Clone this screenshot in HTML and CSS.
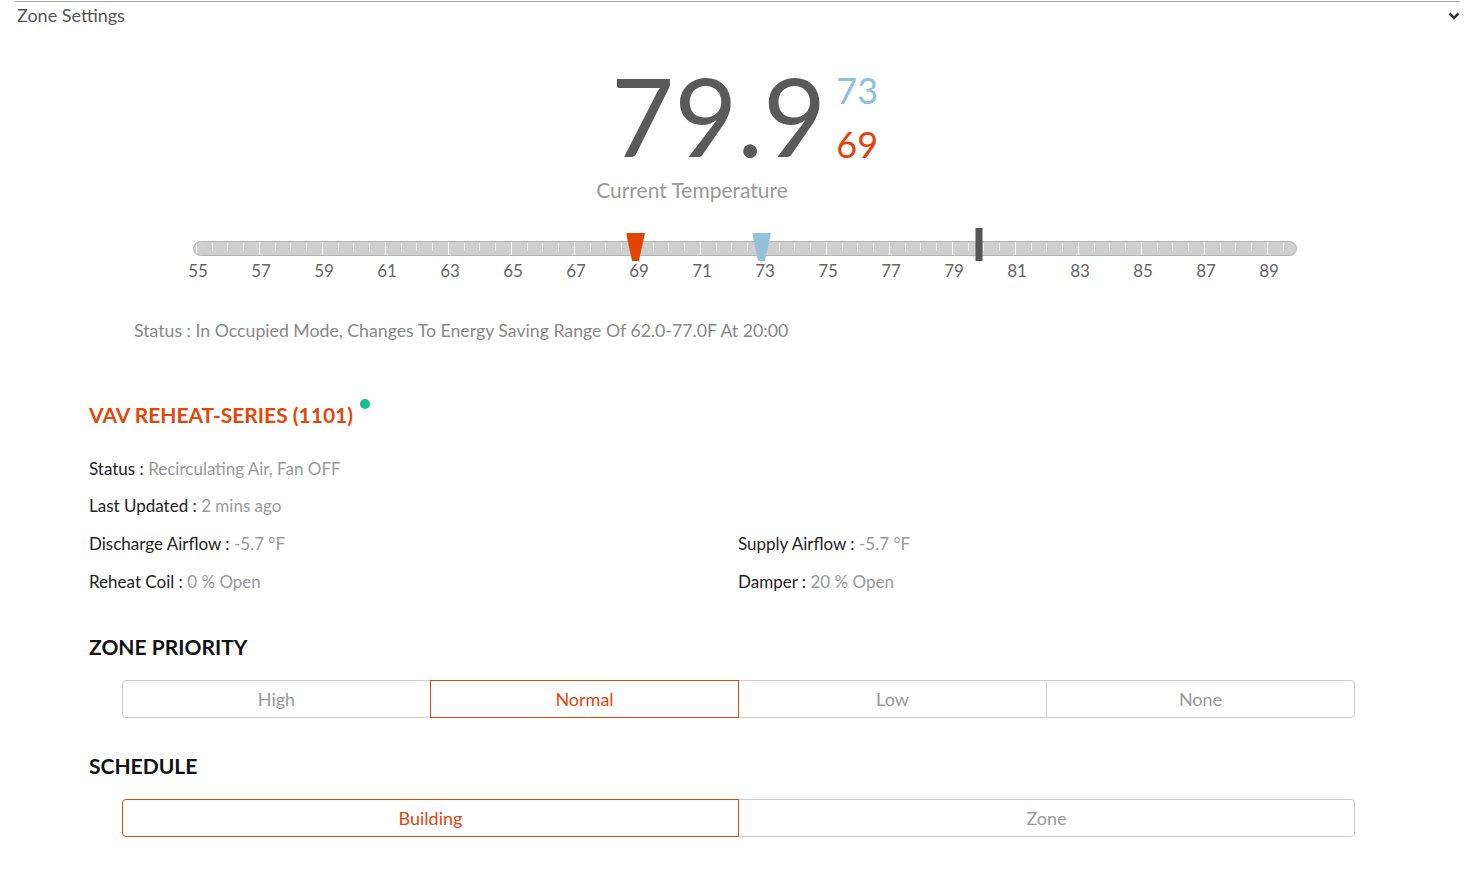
FILE: index.html
```html
<!DOCTYPE html>
<html lang="en">
<head>
    <meta charset="UTF-8">
    <meta name="viewport" content="width=device-width, initial-scale=1.0">
    <title>Zone Settings</title>
    <link rel="stylesheet" href="styles.css">
</head>
<body>
    <div class="panel">
        <div class="panel-header">
            <span class="panel-title">Zone Settings</span>
            <svg class="chevron" width="12" height="8" viewBox="0 0 12 8">
                <path d="M1.5 1.5 L6 6 L10.5 1.5" fill="none" stroke="#333" stroke-width="2.6"/>
            </svg>
        </div>

        <div class="panel-body">
            <div class="readout">
                <div class="current">79.9</div>
                <div class="setpoints">
                    <div class="cool">73</div>
                    <div class="heat">69</div>
                </div>
            </div>
            <div class="caption">Current Temperature</div>

            <!-- temperature scale, 55 to 90 -->
            <div class="scale">
                <div class="track"></div>
                <div class="marker heat-marker" style="--v: 69"></div>
                <div class="marker cool-marker" style="--v: 73"></div>
                <div class="marker now-marker" style="--v: 79.9"></div>
                <div class="scale-labels">
                    <span>55</span><span>57</span><span>59</span><span>61</span><span>63</span><span>65</span>
                    <span>67</span><span>69</span><span>71</span><span>73</span><span>75</span><span>77</span>
                    <span>79</span><span>81</span><span>83</span><span>85</span><span>87</span><span>89</span>
                </div>
            </div>

            <p class="zone-status">Status : In Occupied Mode, Changes To Energy Saving Range Of 62.0-77.0F At 20:00</p>

            <h2 class="unit-title">VAV REHEAT-SERIES (1101) <span class="online-dot"></span></h2>

            <div class="details">
                <div class="detail wide"><span class="label">Status :</span> <span class="value">Recirculating Air, Fan OFF</span></div>
                <div class="detail wide"><span class="label">Last Updated :</span> <span class="value">2 mins ago</span></div>
                <div class="detail"><span class="label">Discharge Airflow :</span> <span class="value">-5.7 °F</span></div>
                <div class="detail"><span class="label">Supply Airflow :</span> <span class="value">-5.7 °F</span></div>
                <div class="detail"><span class="label">Reheat Coil :</span> <span class="value">0 % Open</span></div>
                <div class="detail"><span class="label">Damper :</span> <span class="value">20 % Open</span></div>
            </div>

            <h3 class="section-title priority-title">ZONE PRIORITY</h3>
            <div class="segmented">
                <button class="segment">High</button>
                <button class="segment active">Normal</button>
                <button class="segment">Low</button>
                <button class="segment">None</button>
            </div>

            <h3 class="section-title schedule-title">SCHEDULE</h3>
            <div class="segmented">
                <button class="segment active">Building</button>
                <button class="segment">Zone</button>
            </div>
        </div>
    </div>
</body>
</html>
```

FILE: styles.css
```css
body {
    font-family: Lato, "Open Sans", sans-serif;
    margin: 0;
    padding: 0;
    background-color: #fff;
    color: #222;
}

.panel {
    margin: 1px 23px 0 15px;
    border-top: 1px solid #a6a6a6;
}

.panel-header {
    display: flex;
    justify-content: space-between;
    align-items: center;
    padding: 1px 0 0 2px;
}

.panel-title {
    font-size: 18px;
    line-height: 25px;
    color: #555;
}

.chevron {
    display: block;
}

.panel-body {
    padding: 0 73px 40px 74px;
}

/* big temperature readout */
.readout {
    display: flex;
    justify-content: center;
    align-items: flex-start;
    margin-top: 32px;
    padding-left: 13px;
}

.current {
    font-size: 109px;
    line-height: 110px;
    color: #5a5a5a;
}

.setpoints {
    margin-top: 3px;
    margin-left: 10px;
    font-size: 36px;
    line-height: 54px;
}

.cool {
    color: #8fbfdc;
}

.heat {
    color: #e2440a;
}

.caption {
    margin-top: 6px;
    padding-right: 92px;
    text-align: center;
    font-size: 21px;
    line-height: 25px;
    color: #999;
}

/* scale */
.scale {
    position: relative;
    width: 1104px;
    margin: 26px 0 0 104px;
    padding-top: 13px;
}

.track {
    height: 13px;
    border: 1px solid #b3b3b3;
    border-radius: 8px;
    background-color: #cfcfd0;
    background-image:
        repeating-linear-gradient(to right, #fff 0 1px, transparent 1px 63px),
        repeating-linear-gradient(to right, rgba(255, 255, 255, 0.9) 0 1px, transparent 1px 15.75px);
    background-size: 100% 100%, 100% 8px;
    background-position: 2px 0, 2px 1px;
    background-repeat: repeat-x;
}

.marker {
    position: absolute;
    left: calc((var(--v) - 55) * 31.5px + 1.5px);
    transform: translateX(-50%);
}

.heat-marker,
.cool-marker {
    top: 5px;
    width: 19px;
    height: 28px;
    clip-path: polygon(0 0, 100% 0, 68% 100%, 32% 100%);
}

.heat-marker {
    background-color: #e24300;
}

.cool-marker {
    background-color: #94c1dc;
}

.now-marker {
    top: 0;
    width: 7px;
    height: 33px;
    background-color: #555;
}

.scale-labels {
    display: flex;
    margin: 5px 0 0 -26.5px;
}

.scale-labels span {
    width: 63px;
    flex: none;
    text-align: center;
    font-size: 17px;
    line-height: 20px;
    color: #666;
}

.zone-status {
    margin: 39px 0 0;
    padding-left: 45px;
    font-size: 17.7px;
    line-height: 21px;
    color: #888;
}

/* unit info */
.unit-title {
    display: flex;
    gap: 7px;
    margin: 61px 0 0;
    font-size: 21px;
    line-height: 25px;
    font-weight: 700;
    color: #e2470c;
}

.online-dot {
    width: 10px;
    height: 10px;
    margin-top: -3px;
    border-radius: 50%;
    background-color: #10bf8d;
}

.details {
    display: grid;
    grid-template-columns: 649px 1fr;
    row-gap: 17.7px;
    margin-top: 31.5px;
    font-size: 17px;
    line-height: 20px;
}

.detail.wide {
    grid-column: 1 / -1;
}

.detail .label {
    color: #222;
}

.detail .value {
    color: #999;
}

.section-title {
    margin: 0;
    font-size: 21px;
    line-height: 25px;
    font-weight: 700;
    color: #111;
}

.priority-title {
    margin-top: 42.5px;
}

.schedule-title {
    margin-top: 35px;
}

.segmented {
    display: flex;
    margin: 21px 32px 0 33px;
}

.segment {
    flex: 1;
    height: 38px;
    margin-left: -1px;
    padding: 0;
    border: 1px solid #ccc;
    background-color: #fff;
    font-family: inherit;
    font-size: 18px;
    color: #999;
    cursor: pointer;
}

.segment:first-child {
    margin-left: 0;
    border-radius: 4px 0 0 4px;
}

.segment:last-child {
    border-radius: 0 4px 4px 0;
}

.segment.active {
    position: relative;
    border-color: #e2470c;
    color: #e2470c;
}
```
